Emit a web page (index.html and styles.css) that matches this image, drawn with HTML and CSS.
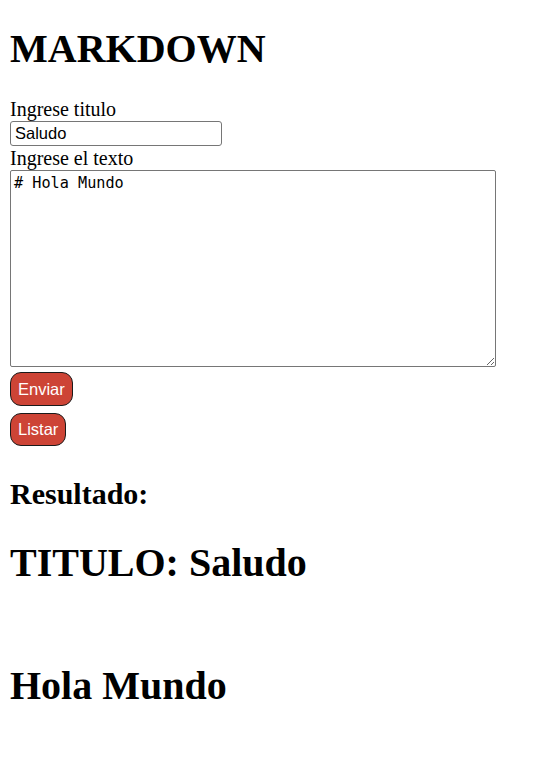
FILE: index.html
```html
<!DOCTYPE html>
<html lang="es">
<head>
<meta charset="utf-8">
<title>Markdown</title>
<link rel="stylesheet" href="styles.css">
</head>
<body>
<h1 class="title">MARKDOWN</h1>
<form class="form">
  <label class="label" for="titulo">Ingrese titulo</label>
  <input class="input" id="titulo" type="text" value="Saludo">
  <label class="label label-text" for="texto">Ingrese el texto</label>
  <textarea class="textarea" id="texto"># Hola Mundo</textarea>
  <button class="btn btn-send" type="button">Enviar</button>
  <button class="btn btn-list" type="button">Listar</button>
</form>
<h2 class="result-label">Resultado:</h2>
<h1 class="result-title">TITULO: Saludo</h1>
<div class="result-body">
  <h1 class="result-h1">Hola Mundo</h1>
</div>
</body>
</html>
```
FILE: styles.css
```css
html, body {
  background: #ffffff;
}
body {
  margin: 0;
  padding: 0 10px;
  font-family: "Liberation Serif", "Times New Roman", serif;
  color: #000;
}
.title {
  font-size: 40px;
  font-weight: bold;
  margin: 26px 0 26px;
  line-height: 46px;
}
.form {
  display: flex;
  flex-direction: column;
  align-items: flex-start;
}
.label {
  font-size: 20px;
  line-height: 23px;
}
.label-text {
  margin-top: 0;
  line-height: 24px;
}
.input {
  box-sizing: border-box;
  width: 212px;
  height: 25px;
  margin: 0;
  padding: 1px 4px;
  border: 1px solid #767676;
  border-radius: 3px;
  font-family: "Liberation Sans", Arial, sans-serif;
  font-size: 16.5px;
  color: #000;
}
.textarea {
  box-sizing: border-box;
  width: 486px;
  height: 197px;
  margin: 0;
  padding: 3px 3px;
  border: 1px solid #767676;
  border-radius: 2px;
  font-family: "DejaVu Sans Mono", "Liberation Mono", monospace;
  font-size: 15.2px;
  line-height: 18px;
  color: #000;
  resize: both;
}
.btn {
  box-sizing: border-box;
  margin: 0;
  padding: 0 7px;
  background: #cd4436;
  color: #fff;
  border: 1px solid #1a1a1a;
  border-radius: 11px;
  font-family: "Liberation Sans", Arial, sans-serif;
  font-size: 16.5px;
}
.btn-send {
  margin-top: 5px;
  height: 34px;
}
.btn-list {
  margin-top: 7px;
  height: 33px;
}
.result-label {
  font-size: 30px;
  font-weight: bold;
  line-height: 34px;
  margin: 31px 0 0;
}
.result-title {
  font-size: 40px;
  font-weight: bold;
  line-height: 46px;
  margin: 29px 0 0;
}
.result-body {
  padding-top: 77px;
}
.result-h1 {
  font-size: 40px;
  font-weight: bold;
  line-height: 46px;
  margin: 0;
}
```
